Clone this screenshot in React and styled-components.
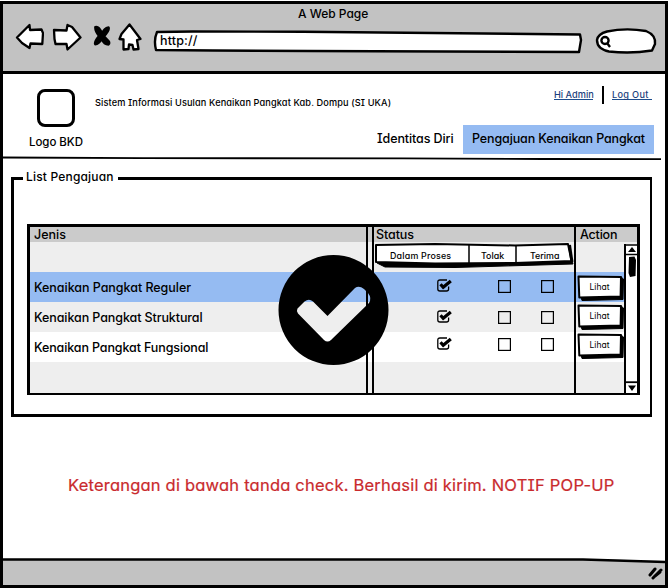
import React from "react";
import styled, { createGlobalStyle } from "styled-components";

const GlobalStyle = createGlobalStyle`
  * { box-sizing: border-box; }
  body {
    margin: 0;
    background: #fff;
    color: #000;
    font-family: Inter, "Liberation Sans", sans-serif;
    font-feature-settings: "cv11", "cv08";
    font-weight: 500;
    overflow: hidden;
  }
`;

const Label = styled.span`
  display: block;
  white-space: nowrap;
  font-size: ${(p) => p.$size || 12.5}px;
  line-height: ${(p) => p.$line || 16}px;
  letter-spacing: ${(p) => p.$track || 0}px;
`;

const Window = styled.div`
  width: 668px;
  height: 587px;
  margin-top: 1px;
  display: flex;
  flex-direction: column;
  border: 3px solid #000;
  background: #fff;
`;

const Chrome = styled.header`
  flex: none;
  height: 70px;
  background: #c2c2c2;
  border-bottom: 3px solid #000;
`;

const TitleBar = styled.div`
  height: 18px;
  padding: 2px 0 0 295px;
`;

const Toolbar = styled.div`
  display: flex;
  align-items: flex-start;
  height: 34px;
  padding-left: 12px;
`;

const ToolIcon = styled.svg`
  flex: none;
  display: block;
  margin-right: ${(p) => p.$gap}px;
  fill: #fff;
  stroke: #000;
  stroke-width: 2.3;
  stroke-linejoin: round;
  stroke-linecap: round;
`;

const Field = styled.div`
  position: relative;
  width: ${(p) => p.$width}px;
  height: 28px;
  margin: 5px ${(p) => p.$gap || 0}px 0 0;
  padding: 6px 0 0 7px;
`;

const Outline = styled.svg`
  position: absolute;
  inset: 0;
  fill: #fff;
  stroke: #000;
  stroke-width: 2.4;
  stroke-linejoin: round;
  overflow: visible;
`;

const FieldText = styled(Label)`
  position: relative;
`;

const Page = styled.main`
  flex: 1;
  min-height: 0;
`;

const Masthead = styled.div`
  display: flex;
  height: 82px;
`;

const Brand = styled.div`
  width: 92px;
  padding: 15px 0 0 26px;
`;

const Logo = styled.div`
  width: 38px;
  height: 38px;
  margin: 0 0 7px 8px;
  border: 3px solid #000;
  border-radius: 8px;
`;

const Tagline = styled.div`
  width: 278px;
  padding-top: 21px;
`;

const Right = styled.div`
  flex: 1;
`;

const UserLinks = styled.div`
  display: flex;
  height: 51px;
  padding: 12px 0 0 181px;
`;

const UserLink = styled.a`
  width: ${(p) => p.$width}px;
  height: 13px;
  margin-top: 1px;
  border-bottom: 1px solid #1c4c8c;
  color: #1c3f7c;
  font-size: 9.2px;
  line-height: 16px;
  letter-spacing: ${(p) => p.$track}px;
  white-space: nowrap;
`;

const LinkDivider = styled.i`
  width: 2px;
  height: 18px;
  margin: 0 8px 0 9px;
  background: #000;
`;

const Tabs = styled.nav`
  display: flex;
`;

const Tab = styled.div`
  height: 29px;
  width: ${(p) => p.$width}px;
  padding: 6px 0 0 ${(p) => p.$pad}px;
  background: ${(p) => (p.$active ? "#95bbf2" : "transparent")};
`;

const Rule = styled.svg`
  display: block;
  fill: none;
  stroke: #000;
  overflow: visible;
`;

const Group = styled.section`
  position: relative;
  width: 641px;
  height: 240px;
  margin: 17px 0 0 8px;
  padding: 44px 0 0 13px;
  border: 3px solid #000;
  border-right-width: 2px;
`;

const Legend = styled.div`
  position: absolute;
  top: -11px;
  left: 9px;
  width: 95px;
  padding-left: 3px;
  background: #fff;
`;

const Table = styled.div`
  position: relative;
  width: 613px;
  height: 171px;
  display: flex;
  flex-direction: column;
  border: 3px solid #000;
  border-bottom-width: 2px;
`;

const Row = styled.div`
  display: grid;
  grid-template-columns: 338px 4px 204px 1fr;
  flex: none;
  height: ${(p) => p.$height || 30}px;
  background: ${(p) => p.$fill};
`;

const Cell = styled.div`
  min-width: 0;
  display: flex;
  align-items: flex-start;
  padding: ${(p) => p.$top || 0}px 0 0 ${(p) => p.$left || 0}px;
  border-right: ${(p) => (p.$right ? "2px solid #000" : "0")};
  border-left: ${(p) => (p.$lead ? "2px solid #000" : "0")};
`;

const Body = styled.div`
  flex: 1;
  display: flex;
  min-height: 0;
  background: #eee;
`;

const Rows = styled.div`
  width: 594px;
  flex: none;
  height: 100%;
  display: flex;
  flex-direction: column;
`;

const LastRow = styled(Row)`
  flex: 1;
`;

const SubHeads = styled.div`
  position: relative;
  display: flex;
  padding: 2px 0 0 15px;
  width: 199px;
  height: 26px;
`;

const SubHead = styled(Label)`
  position: relative;
  flex: none;
  width: ${(p) => p.$width}px;
  padding-top: 4px;
`;

const CheckSvg = styled.svg`
  flex: none;
  overflow: visible;
  margin: ${(p) => p.$top}px ${(p) => p.$gap}px 0 0;
  fill: none;
  stroke: #000;
`;

const LihatButton = styled.button`
  position: relative;
  width: 48px;
  height: 27px;
  margin: ${(p) => p.$top}px 0 0 1px;
  padding: 0 2px 4px 0;
  border: 0;
  background: none;
  color: #000;
  font-family: inherit;
  font-weight: 400;
  font-feature-settings: inherit;
`;

const Scroll = styled.div`
  width: 13px;
  flex: none;
  display: flex;
  flex-direction: column;
  justify-content: space-between;
  margin-top: 2px;
  background: #fff;
  border-left: 2px solid #000;
`;

const Overlay = styled.svg`
  position: absolute;
  left: 248px;
  top: 27px;
`;

const Notice = styled.p`
  margin: 57px 0 0 65px;
  color: #c92a2d;
  font-weight: 400;
  font-size: 16.5px;
  line-height: 22px;
  letter-spacing: ${(p) => p.$track}px;
  white-space: nowrap;
  -webkit-text-stroke: 0.2px #c92a2d;
`;

const Footer = styled.footer`
  flex: none;
  display: flex;
  justify-content: flex-end;
  height: 26px;
  background: #c2c2c2;
  position: relative;
`;

const FooterEdge = styled.svg`
  position: absolute;
  left: 0;
  top: -1px;
`;

const Grip = styled.svg`
  margin: 7px 1px 0 0;
  stroke: #000;
  stroke-width: 3;
  stroke-linecap: round;
`;

function Checkbox({ checked, top, gap }) {
  if (!checked) {
    return (
      <CheckSvg width="13" height="13" $top={top} $gap={gap}>
        <rect x=".6" y=".6" width="11.8" height="11.8" strokeWidth="1.2" />
      </CheckSvg>
    );
  }
  return (
    <CheckSvg width="15" height="13" $top={top} $gap={gap}>
      <path d="M11.6 7.5V10Q11.6 12 9.5 12H3Q.8 12 .8 10V3Q.8 1 3 1H10" strokeWidth="1.3" />
      <path d="M3.5 5.3L6.2 8.3L13.8 2" strokeWidth="3.2" />
    </CheckSvg>
  );
}

function Lihat({ top }) {
  return (
    <LihatButton $top={top}>
      <Outline width="48" height="27">
        <path d="M4 22L5 25.5L46 24.5L46.5 4L44 2V22Z" fill="#000" strokeWidth="1" />
        <path d="M1.5 1.5L44 2L43.6 21.6L2.3 22.5Z" strokeWidth="2" />
      </Outline>
      <FieldText $size={8.5} $line={22}>Lihat</FieldText>
    </LihatButton>
  );
}

const requests = [
  { name: "Kenaikan Pangkat Reguler", fill: "#95bbf2", boxTop: 8, button: 3, track: -0.04 },
  { name: "Kenaikan Pangkat Struktural", fill: "#eee", boxTop: 9, button: 2, track: -0.09 },
  { name: "Kenaikan Pangkat Fungsional", fill: "#fff", boxTop: 6, button: 1, track: -0.12 },
];

export default function App() {
  return (
    <>
      <GlobalStyle />
      <Window>
        <Chrome>
          <TitleBar><Label $size={12}>A Web Page</Label></TitleBar>
          <Toolbar>
            <ToolIcon width="29" height="30" $gap={8}>
              <path d="M2 15.5L14.5 3L15 8L26.5 7.5L28 11L27.3 22L15.5 21.5L14.5 26L7 21Z" />
            </ToolIcon>
            <ToolIcon width="30" height="30" $gap={11}>
              <path d="M2 8L14.5 8.5L15.5 3L20 5L28.5 15.5L15.5 27.5L14.5 22L3.5 22L2.5 17Z" />
            </ToolIcon>
            <ToolIcon width="18" height="30" $gap={7}>
              <path d="M2.3 5.2Q6 4 9 11.5Q11 6 15.5 5.3Q17 8 11 14.2L15.5 19Q17 21 15.5 22.5Q11 22.5 8.7 17Q6 22 2.2 22.3Q1 20 6 14Q2 9 2.3 5.2Z" fill="#000" />
            </ToolIcon>
            <ToolIcon width="25" height="30" $gap={10}>
              <path d="M11.5 2.5L22.5 17L19 18L20.5 27L15.5 27.5L14.5 23L11 22.5L10.5 27L5.5 27.5L5.5 17.5L1.5 17L3.5 12Z" />
            </ToolIcon>
            <Field $width={428} $gap={15}>
              <Outline width="428" height="28">
                <path d="M4 5L40 4.5L150 4.8L427 7.5L428 13L426 25L155 24L60 23.5L3 23Q.5 13 4 5Z" />
              </Outline>
              <FieldText $size={12.5} $track={0.15}>http://</FieldText>
            </Field>
            <Field $width={60}>
              <Outline width="60" height="28">
                <path d="M11 4.5Q30 .5 50 4Q60 8 59 17L56 23.5Q35 27 13 24.5Q1 22 1 13Q2 7 11 4.5Z" />
                <ellipse cx="9" cy="13.5" rx="3.6" ry="3.5" />
                <path d="M11 16L14 20" />
              </Outline>
            </Field>
          </Toolbar>
        </Chrome>
        <Page>
          <Masthead>
            <Brand>
              <Logo />
              <Label $size={11.5} $track={-0.05}>Logo BKD</Label>
            </Brand>
            <Tagline>
              <Label $size={9.2} $track={0.12}>Sistem Informasi Usulan Kenaikan Pangkat Kab. Dompu (SI UKA)</Label>
            </Tagline>
            <Right>
              <UserLinks>
                <UserLink $width={39} $track={0}>Hi Admin</UserLink>
                <LinkDivider />
                <UserLink $width={40} $track={0.3}>Log Out</UserLink>
              </UserLinks>
              <Tabs>
                <Tab $width={90} $pad={4}><Label $track={-0.1}>Identitas Diri</Label></Tab>
                <Tab $width={191} $pad={9} $active><Label $track={-0.13}>Pengajuan Kenaikan Pangkat</Label></Tab>
              </Tabs>
            </Right>
          </Masthead>
          <Rule width="659" height="4">
            <path d="M0 1.5L140 2.2L400 2.3L540 3L658 3.2" strokeWidth="1.8" />
          </Rule>
          <Group>
            <Legend><Label $size={12} $track={0.18}>List Pengajuan</Label></Legend>
            <Table>
              <Row $height={15} $fill="#cbcbcb">
                <Cell $left={4} $right><Label $line={15}>Jenis</Label></Cell>
                <Cell />
                <Cell $left={2} $lead $right><Label $line={15} $track={-0.1}>Status</Label></Cell>
                <Cell $left={4}><Label $line={15} $track={-0.2}>Action</Label></Cell>
              </Row>
              <Body>
                <Rows>
                  <Row $fill="#eee">
                    <Cell $right />
                    <Cell />
                    <Cell $top={1} $left={1} $lead $right>
                      <SubHeads>
                        <Outline width="199" height="26">
                          <path d="M2 20L10 24L80 24.5L198 21L197 17L2 18Z" fill="#000" strokeWidth="1" />
                          <path d="M1 2L60 1L140 2.5L193 1L196.5 18L140 20L60 20.5L1 19Z" strokeWidth="2" />
                          <path d="M94 2V21M141 2V21" strokeWidth="1.5" />
                          <path d="M194.5 2L197 19" strokeWidth="3" />
                        </Outline>
                        <SubHead $size={8.9} $line={13} $width={91} $track={0.2}>Dalam Proses</SubHead>
                        <SubHead $size={8.9} $line={13} $width={49}>Tolak</SubHead>
                        <SubHead $size={8.9} $line={13} $width={40}>Terima</SubHead>
                      </SubHeads>
                    </Cell>
                    <Cell />
                  </Row>
                  {requests.map((r) => (
                    <Row key={r.name} $fill={r.fill}>
                      <Cell $left={4} $top={8} $right><Label $track={r.track}>{r.name}</Label></Cell>
                      <Cell />
                      <Cell $left={63} $lead $right>
                        <Checkbox checked top={r.boxTop - 1} gap={46} />
                        <Checkbox top={r.boxTop} gap={30} />
                        <Checkbox top={r.boxTop} gap={0} />
                      </Cell>
                      <Cell><Lihat top={r.button} /></Cell>
                    </Row>
                  ))}
                  <LastRow $fill="#eee">
                    <Cell $right />
                    <Cell />
                    <Cell $lead $right />
                    <Cell />
                  </LastRow>
                </Rows>
                <Scroll>
                  <svg width="12" height="35">
                    <path d="M6 3L10 8H2Z" />
                    <path d="M0 10.5H12M0 1H12" stroke="#000" strokeWidth="1.5" />
                    <path d="M3 13L8.5 12.5L10 16L9.5 32L4 33L2.5 29Z" />
                  </svg>
                  <svg width="12" height="12">
                    <path d="M0 1.2H12" stroke="#000" strokeWidth="1.8" />
                    <path d="M2 4.5H10L6 10Z" />
                  </svg>
                </Scroll>
              </Body>
              <Overlay width="112" height="112">
                <path
                  fillRule="evenodd"
                  d="M55.5 1A55 55 0 1 1 55.5 111A55 55 0 1 1 55.5 1ZM19.5 54.5Q18 57 20 59.5L46 86Q49.5 89 53 86L91 49Q94 44 90 39L86 35Q81 31 77 34L49.5 62L35 47.5Q31 44 26.5 47.5Z"
                />
              </Overlay>
            </Table>
          </Group>
          <Notice $track={0.21}>Keterangan di bawah tanda check. Berhasil di kirim. NOTIF POP-UP</Notice>
        </Page>
        <Footer>
          <FooterEdge width="662" height="6">
            <path d="M550 0H662V3Z" fill="#fff" />
            <path d="M0 1.5H580L662 4" fill="none" stroke="#000" strokeWidth="2.5" />
          </FooterEdge>
          <Grip width="17" height="14">
            <path d="M3 9L8 3M6 12L14 4M8 10L13 6" />
          </Grip>
        </Footer>
      </Window>
    </>
  );
}
